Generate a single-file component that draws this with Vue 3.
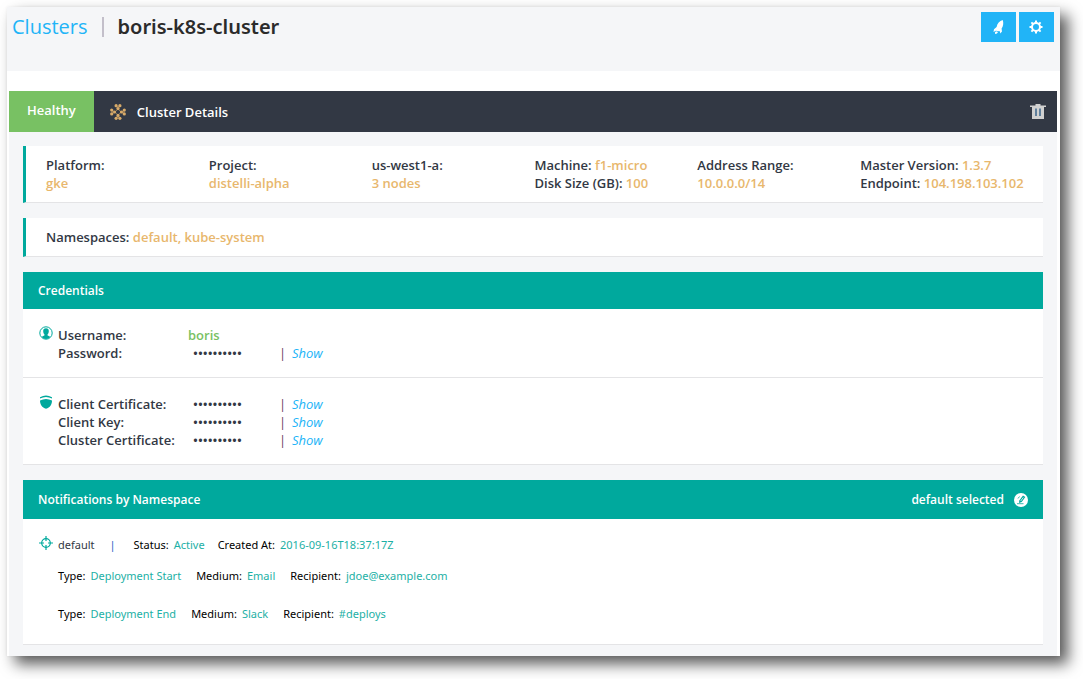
<script setup>
const facts = [
  [{ label: 'Platform:', value: 'gke', stacked: true }],
  [{ label: 'Project:', value: 'distelli-alpha', stacked: true }],
  [{ label: 'us-west1-a:', value: '3 nodes', stacked: true }],
  [
    { label: 'Machine:', value: 'f1-micro' },
    { label: 'Disk Size (GB):', value: '100' },
  ],
  [{ label: 'Address Range:', value: '10.0.0.0/14', stacked: true }],
  [
    { label: 'Master Version:', value: '1.3.7' },
    { label: 'Endpoint:', value: '104.198.103.102' },
  ],
]
const secrets = ['Client Certificate:', 'Client Key:', 'Cluster Certificate:']
const mask = '•'.repeat(10)
const notifications = [
  [['Type:', 'Deployment Start'], ['Medium:', 'Email'], ['Recipient:', 'jdoe@example.com']],
  [['Type:', 'Deployment End'], ['Medium:', 'Slack'], ['Recipient:', '#deploys']],
]
</script>

<template>
  <div class="window">
    <header class="top">
      <h1 class="crumbs">
        <a href="#">Clusters</a>
        <span class="bar"></span>
        <span class="name">boris-k8s-cluster</span>
      </h1>
      <div class="actions">
        <button type="button" aria-label="Deploy">
          <svg width="14" height="16" viewBox="0 0 14 16" fill="#fff">
            <path d="M10.7 1C7.500 1.700 5.200 4.500 4.600 8L2 10.300 1.500 13 4.200 11.600 4.500 11.900 7.900 12.300 8.200 14.500 10 12.400 9.600 9.600C11.200 7.200 11.800 4 10.700 1zM4 12.300 2.900 13.600 3.200 14.900 5 14.500 6 13z" />
          </svg>
        </button>
        <button type="button" aria-label="Settings">
          <svg width="15" height="14" viewBox="0 0 15 14" fill="none" stroke="#fff">
            <circle cx="7" cy="7" r="4" stroke-width="2" />
            <path d="M7 .5v2.500M7 11v2.500M.5 7H3M11 7h2.500M2.400 2.400l1.700 1.700M9.900 9.900l1.700 1.700M11.600 2.400 9.900 4.100M4.100 9.900l-1.700 1.700" stroke-width="2" />
          </svg>
        </button>
      </div>
    </header>

    <main class="panel">
      <div class="titlebar">
        <span class="status">Healthy</span>
        <svg class="cluster-icon" width="16" height="16" viewBox="0 0 16 16" fill="#d9ab69">
          <g v-for="a in [0, 90, 180, 270]" :key="a" :transform="`rotate(${a} 8 8)`">
            <circle cx="6.100" cy="1.700" r="1.600" />
            <circle cx="9.900" cy="1.700" r="1.600" />
            <circle cx="8" cy="4.600" r="1.600" />
            <path d="M5.500 2.500 8 5 10.500 2.500 8 1.800z" opacity=".4" />
            <circle cx="6.400" cy="6.400" r=".6" opacity=".6" />
          </g>
        </svg>
        <h2>Cluster Details</h2>
        <button type="button" class="trash" aria-label="Delete cluster">
          <svg width="16" height="16" viewBox="0 0 16 16" fill="#d0d0d0">
            <path d="M5.500 0h5v1.500H16V3H0V1.500h5.500zM2 3h12v12H2z" />
            <path d="M5 4.500h2v7.500H5zM9 4.500h2v7.500H9z" fill="#5f7f9c" />
          </svg>
        </button>
      </div>

      <div class="content">
        <section class="card facts">
          <div v-for="(col, i) in facts" :key="i">
            <div v-for="f in col" :key="f.label">
              {{ f.label }}<br v-if="f.stacked" />{{ ' ' }}<span class="gold">{{ f.value }}</span>
            </div>
          </div>
        </section>

        <section class="card">
          Namespaces: <span class="gold">default, kube-system</span>
        </section>

        <section class="block">
          <h3>Credentials</h3>
          <div class="group">
            <svg width="14" height="14" viewBox="0 0 14 14">
              <circle cx="7" cy="7" r="6.200" fill="none" stroke="#00a99d" />
              <path d="M7 2.300c-1.900 0-2.900 1.300-2.800 3 .1 1.500.5 2.500 1.200 3v1.200c-1 .4-2.100.8-2.700 1.600A6.200 6.200 0 0 0 7 13a6.200 6.200 0 0 0 4.300-1.900c-.6-.8-1.700-1.200-2.700-1.600V8.300c.7-.5 1.100-1.500 1.200-3 .1-1.700-.9-3-2.800-3z" fill="#00a99d" />
            </svg>
            <div class="rows">
              <div class="row"><span>Username:</span><span class="green">boris</span></div>
              <div class="row">
                <span>Password:</span><span class="mask">{{ mask }}</span>
                <span class="sep">|</span><a href="#">Show</a>
              </div>
            </div>
          </div>
          <div class="group">
            <svg width="14" height="14" viewBox="0 0 14 14" fill="#00a99d">
              <path d="M1 2.300Q7-1.200 13 2.300V3.600Q7 .6 1 3.600zM1 5.500Q7 2.300 13 5.500C13 9.500 11 12.500 7 13.800 3 12.500 1 9.500 1 5.500z" />
            </svg>
            <div class="rows">
              <div v-for="s in secrets" :key="s" class="row">
                <span>{{ s }}</span><span class="mask">{{ mask }}</span>
                <span class="sep">|</span><a href="#">Show</a>
              </div>
            </div>
          </div>
        </section>

        <section class="block notes">
          <h3>
            <span>Notifications by Namespace</span>
            <span class="selected">default selected
              <button type="button" aria-label="Edit selection">
                <svg width="14" height="14" viewBox="0 0 14 14">
                  <circle cx="7" cy="7" r="7" fill="#fff" />
                  <path d="M5.300 7.500 9 2.500 11.300 4.100 7.700 9 5 10z" fill="#00a99d" />
                  <path d="M6.700 8 9.300 4.500" stroke="#fff" stroke-width=".8" />
                  <path d="M3 10.700h6.500M5.500 3.500 4 5.500" stroke="#00a99d" stroke-width=".8" />
                </svg>
              </button>
            </span>
          </h3>
          <div class="namespace">
            <div class="line head">
              <svg width="14" height="14" viewBox="0 0 14 14" fill="none" stroke="#00a99d">
                <circle cx="7" cy="7" r="4.300" stroke-width="1.200" />
                <path d="M7 0v5M7 9v5M0 7h5M9 7h5" stroke-width="1.200" />
              </svg>
              <span class="ns">default</span>
              <span class="pipe">|</span>
              <span class="pair">Status: <b>Active</b></span>
              <span class="pair">Created At: <b>2016-09-16T18:37:17Z</b></span>
            </div>
            <div v-for="(n, i) in notifications" :key="i" class="line">
              <span v-for="[k, v] in n" :key="k" class="pair">{{ k }} <b>{{ v }}</b></span>
            </div>
          </div>
        </section>
      </div>
    </main>
  </div>
</template>

<style>
body {
  background: #fff;
}
</style>

<style scoped>
.window {
  margin: 7px 23px 23px 7px;
  background: #fff;
  box-shadow: 8px 8px 14px rgba(0, 0, 0, 0.65), 0 0 3px rgba(0, 0, 0, 0.06);
  font: 600 13px/18px "Open Sans", sans-serif;
  color: #323844;
}
h1, h2, h3 {
  margin: 0;
  font-size: 13px;
  font-weight: 600;
}
button {
  display: flex;
  align-items: center;
  justify-content: center;
  padding: 0;
  border: 0;
  background: none;
  cursor: pointer;
}
svg {
  display: block;
  flex: none;
}
a {
  color: #21b4f7;
  text-decoration: none;
}
.top {
  display: flex;
  justify-content: space-between;
  align-items: flex-start;
  padding: 5px 6px 29px 5px;
  background: #f5f6f8;
}
.crumbs {
  display: flex;
  align-items: center;
  font-size: 20px;
  line-height: 30px;
  color: #2b2b2b;
}
.crumbs a {
  font-weight: 400;
}
.name {
  font-family: "Noto Sans", "Open Sans", sans-serif;
}
.bar {
  width: 2px;
  height: 20px;
  margin: 0 14px;
  background: #c3bfca;
}
.actions {
  display: flex;
  gap: 3px;
}
.actions button {
  width: 35px;
  height: 30px;
  background: #21b4f7;
}
.panel {
  margin: 20px 3px 0 2px;
  background: #f5f6f8;
}
.titlebar {
  display: flex;
  align-items: center;
  background: #323844;
  color: #fff;
}
.status {
  padding: 10px 18px 13px;
  background: #78c163;
}
.cluster-icon {
  margin: 0 11px 0 16px;
}
.trash {
  margin: 0 11px 0 auto;
}
.content {
  display: grid;
  gap: 15px;
  padding: 14px 14px 11px;
}
.card {
  padding: 10px 20px;
  background: #fff;
  border-left: 3px solid #00a99d;
  border-bottom: 1px solid #e4e4e6;
}
.facts {
  display: grid;
  grid-template-columns: repeat(6, minmax(0, 1fr));
  white-space: nowrap;
}
.gold {
  color: #e8b76d;
}
.green {
  color: #78c163;
}
.block {
  background: #fff;
}
.block h3 {
  display: flex;
  align-items: center;
  justify-content: space-between;
  padding: 10px 15px 9px;
  font-size: 12px;
  background: #00a99d;
  color: #fff;
}
.group {
  display: flex;
  gap: 5px;
  padding: 17px 15px 15px 16px;
  border-bottom: 1px solid #e4e4e6;
}
.rows {
  flex: 1;
}
.row {
  display: grid;
  grid-template-columns: 130px 91px 13px 1fr;
}
.row a {
  font-weight: 400;
  font-style: italic;
}
.mask {
  padding-left: 5px;
}
.sep {
  font-weight: 400;
  color: #6b3f5c;
}
.notes h3 {
  padding: 11px 15px 10px;
}
.selected {
  display: flex;
  align-items: center;
  gap: 10px;
}
.namespace {
  padding: 17px 15px 21px 16px;
  border-bottom: 1px solid #e4e4e6;
  font-family: "Noto Sans", "Open Sans", sans-serif;
  font-size: 11px;
  font-weight: 400;
  color: #000;
}
.line {
  display: flex;
  gap: 15px;
  padding-left: 19px;
}
.line + .line {
  margin-top: 20px;
}
.head {
  gap: 0;
  padding-left: 0;
}
.head + .line {
  margin-top: 13px;
}
.ns {
  margin-left: 5px;
  color: #323844;
}
.pipe {
  width: 24px;
  margin-left: 15px;
  color: #2f5fc4;
}
.head .pair {
  margin-right: 13px;
}
.pair {
  display: flex;
  gap: 5px;
}
.pair b {
  font-weight: 400;
  color: #1cb0a5;
}
</style>
